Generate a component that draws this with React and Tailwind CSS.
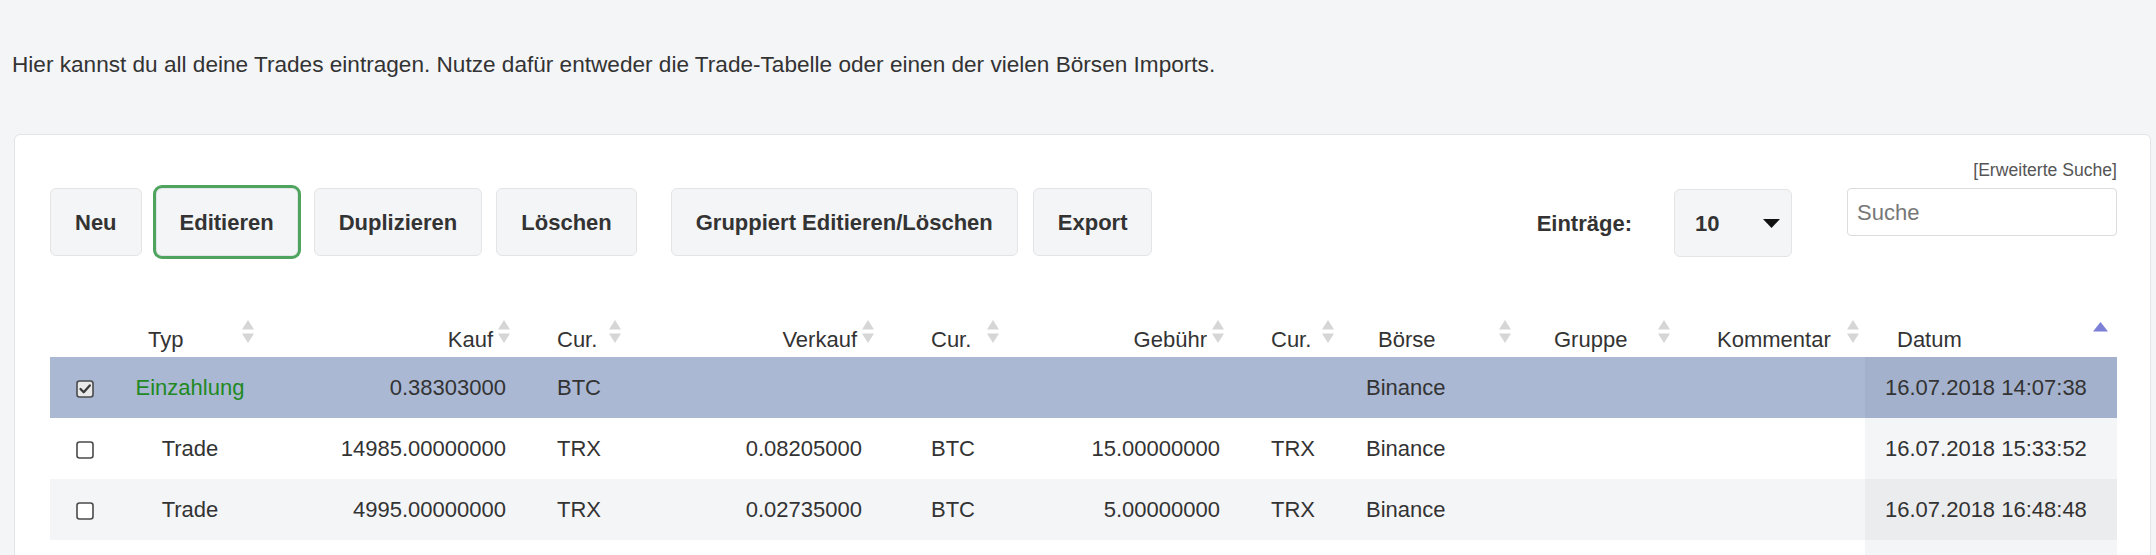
import React from "react";

const FONT = "font-['Liberation_Sans',_Arial,_sans-serif]";

function SortArrows() {
  return (
    <svg className="absolute right-[6px] top-[10px]" width="12" height="24" viewBox="0 0 12 24">
      <polygon points="6,0 12,9.5 0,9.5" fill="#d6d6d6" />
      <polygon points="0,13.5 12,13.5 6,23" fill="#d6d6d6" />
    </svg>
  );
}

function SortUp() {
  return (
    <svg className="absolute right-[9px] top-[12px]" width="15" height="10" viewBox="0 0 15 10">
      <polygon points="7.5,0 15,9.5 0,9.5" fill="#7d80d6" />
    </svg>
  );
}

function Checkbox({ checked }) {
  return (
    <svg width="18" height="18" viewBox="0 0 18 18" className="inline-block align-middle">
      <rect x="1" y="1" width="16" height="16" rx="2.5" fill={checked ? "#e9e9ea" : "#ffffff"} stroke="#4a4a4a" strokeWidth="1.6" />
      {checked && <path d="M4.5 9 L7.7 12.2 L13.8 5.4" fill="none" stroke="#3a3a3a" strokeWidth="2.3" strokeLinecap="round" strokeLinejoin="round" />}
    </svg>
  );
}

function Btn({ children, active }) {
  return (
    <button
      className={
        active
          ? "h-[68px] rounded-[6px] border border-[#e3e4e6] bg-[#f4f5f7] px-[23px] text-[22px] font-bold text-[#333] outline outline-[3px] outline-offset-0 outline-[#4ea45f]"
          : "h-[68px] rounded-[6px] border border-[#e3e4e6] bg-[#f4f5f7] px-[24px] text-[22px] font-bold text-[#333]"
      }
    >
      {children}
    </button>
  );
}

const rows = [
  { sel: true, typ: "Einzahlung", green: true, kauf: "0.38303000", c1: "BTC", verkauf: "", c2: "", geb: "", c3: "", boerse: "Binance", date: "16.07.2018 14:07:38", bg: "bg-[#aab8d4]", dbg: "bg-[#a3b1cc]" },
  { sel: false, typ: "Trade", kauf: "14985.00000000", c1: "TRX", verkauf: "0.08205000", c2: "BTC", geb: "15.00000000", c3: "TRX", boerse: "Binance", date: "16.07.2018 15:33:52", bg: "bg-white", dbg: "bg-[#f4f5f7]" },
  { sel: false, typ: "Trade", kauf: "4995.00000000", c1: "TRX", verkauf: "0.02735000", c2: "BTC", geb: "5.00000000", c3: "TRX", boerse: "Binance", date: "16.07.2018 16:48:48", bg: "bg-[#f4f5f7]", dbg: "bg-[#ebecee]" },
];

export default function App() {
  return (
    <div className={`h-[555px] w-[2156px] overflow-hidden bg-[#f4f5f7] text-[#333] ${FONT}`}>
      <div className="pl-[12px] pt-[50px] text-[22.6px] leading-[30px] text-[#333]">
        Hier kannst du all deine Trades eintragen. Nutze dafür entweder die Trade-Tabelle oder einen der vielen Börsen Imports.
      </div>

      <div className="ml-[14px] mr-[5px] mt-[54px] rounded-[6px] border border-[#e3e4e6] bg-white pl-[35px] pr-[33px] pt-[25px]">
        <div className="flex items-start justify-between">
          <div className="flex items-center pt-[28px]">
            <Btn>Neu</Btn>
            <div className="ml-[14px]"><Btn active>Editieren</Btn></div>
            <div className="ml-[16px]"><Btn>Duplizieren</Btn></div>
            <div className="ml-[14px]"><Btn>Löschen</Btn></div>
            <div className="ml-[34px]"><Btn>Gruppiert Editieren/Löschen</Btn></div>
            <div className="ml-[15px]"><Btn>Export</Btn></div>
          </div>

          <div className="flex items-start">
            <div className="mt-[29px] flex h-[68px] items-center text-[22px] font-bold">Einträge:</div>
            <div className="ml-[42px] mt-[29px] flex h-[68px] w-[118px] items-center justify-between rounded-[6px] border border-[#e3e4e6] bg-[#f4f5f7] pl-[20px] pr-[11px]">
              <span className="text-[22px] font-bold">10</span>
              <svg width="17" height="9" viewBox="0 0 17 9">
                <polygon points="0,0 17,0 8.5,9" fill="#111" />
              </svg>
            </div>
            <div className="ml-[55px] flex w-[270px] flex-col">
              <div className="h-[20px] text-right text-[17.6px] leading-[20px] text-[#555]">[Erweiterte Suche]</div>
              <div className="mt-[8px] flex h-[48px] items-center rounded-[4px] border border-[#dcdcdc] bg-white pl-[9px] text-[22px] text-[#777]">
                Suche
              </div>
            </div>
          </div>
        </div>

        <table className="mt-[53px] w-[2067px] table-fixed border-collapse text-[22px]">
          <colgroup>
            <col className="w-[70px]" />
            <col className="w-[140px]" />
            <col className="w-[256px]" />
            <col className="w-[111px]" />
            <col className="w-[253px]" />
            <col className="w-[125px]" />
            <col className="w-[225px]" />
            <col className="w-[110px]" />
            <col className="w-[177px]" />
            <col className="w-[159px]" />
            <col className="w-[189px]" />
            <col className="w-[252px]" />
          </colgroup>
          <thead>
            <tr className="h-[47px]">
              <th className="p-0"></th>
              <th className="relative pb-[1px] pl-[28px] text-left align-bottom font-normal">Typ<SortArrows /></th>
              <th className="relative pb-[1px] pr-[23px] text-right align-bottom font-normal">Kauf<SortArrows /></th>
              <th className="relative pb-[1px] pl-[41px] text-left align-bottom font-normal">Cur.<SortArrows /></th>
              <th className="relative pb-[1px] pr-[23px] text-right align-bottom font-normal">Verkauf<SortArrows /></th>
              <th className="relative pb-[1px] pl-[51px] text-left align-bottom font-normal">Cur.<SortArrows /></th>
              <th className="relative pb-[1px] pr-[23px] text-right align-bottom font-normal">Gebühr<SortArrows /></th>
              <th className="relative pb-[1px] pl-[41px] text-left align-bottom font-normal">Cur.<SortArrows /></th>
              <th className="relative pb-[1px] pl-[38px] text-left align-bottom font-normal">Börse<SortArrows /></th>
              <th className="relative pb-[1px] pl-[37px] text-left align-bottom font-normal">Gruppe<SortArrows /></th>
              <th className="relative pb-[1px] pl-[41px] text-left align-bottom font-normal">Kommentar<SortArrows /></th>
              <th className="relative pb-[1px] pl-[32px] text-left align-bottom font-normal">Datum<SortUp /></th>
            </tr>
          </thead>
          <tbody>
            {rows.map((r, i) => (
              <tr key={i} className={`h-[61px] ${r.bg}`}>
                <td className="p-0 text-center"><Checkbox checked={r.sel} /></td>
                <td className={r.green ? "p-0 text-center text-[#21891f]" : "p-0 text-center"}>{r.typ}</td>
                <td className="p-0 pr-[10px] text-right">{r.kauf}</td>
                <td className="p-0 pl-[41px]">{r.c1}</td>
                <td className="p-0 pr-[18px] text-right">{r.verkauf}</td>
                <td className="p-0 pl-[51px]">{r.c2}</td>
                <td className="p-0 pr-[10px] text-right">{r.geb}</td>
                <td className="p-0 pl-[41px]">{r.c3}</td>
                <td className="p-0 pl-[26px]">{r.boerse}</td>
                <td className="p-0"></td>
                <td className="p-0"></td>
                <td className={`p-0 pl-[20px] ${r.dbg}`}>{r.date}</td>
              </tr>
            ))}
            <tr className="h-[61px] bg-white">
              <td className="p-0"></td>
              <td className="p-0"></td>
              <td className="p-0"></td>
              <td className="p-0"></td>
              <td className="p-0"></td>
              <td className="p-0"></td>
              <td className="p-0"></td>
              <td className="p-0"></td>
              <td className="p-0"></td>
              <td className="p-0"></td>
              <td className="p-0"></td>
              <td className="bg-[#f4f5f7] p-0"></td>
            </tr>
          </tbody>
        </table>
      </div>
    </div>
  );
}
